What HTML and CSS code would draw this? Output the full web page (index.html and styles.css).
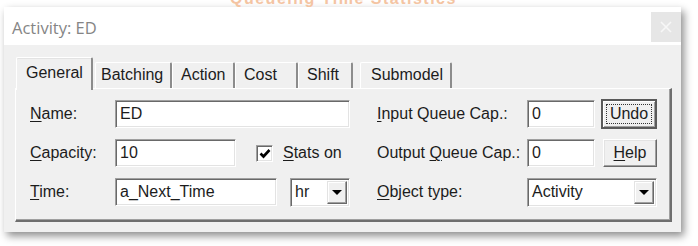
FILE: index.html
```html
<!DOCTYPE html>
<html lang="en">
<head>
  <meta charset="UTF-8">
  <title>Activity: ED</title>
  <link rel="stylesheet" href="styles.css">
</head>
<body>
  <div class="backdrop"><span>Queueing Time Statistics</span></div>

  <div class="window">
    <div class="titlebar">
      <span class="title">Activity: ED</span>
      <div class="close-btn">
        <svg width="12" height="12" viewBox="0 0 12 12"><path d="M1 1L11 11M11 1L1 11" stroke="#f7f7f7" stroke-width="1.6"/></svg>
      </div>
    </div>

    <div class="dialog-body">
      <div class="tabs">
        <div class="tab tab-active">General</div>
        <div class="tab tab-batching">Batching</div>
        <div class="tab tab-action">Action</div>
        <div class="tab tab-cost">Cost</div>
        <div class="tab tab-shift">Shift</div>
        <div class="tab tab-submodel">Submodel</div>
      </div>

      <div class="panel">
        <!-- left column -->
        <div class="group group-left">
          <label class="label"><u>N</u>ame:</label>
          <div class="row">
            <div class="field field-name">ED</div>
          </div>

          <label class="label"><u>C</u>apacity:</label>
          <div class="row">
            <div class="field field-capacity">10</div>
            <div class="checkbox">
              <svg width="12" height="11" viewBox="0 0 12 11"><path d="M1.5 5.5L4.5 8.5L10.5 2" stroke="#000" stroke-width="2.6" fill="none"/></svg>
            </div>
            <span class="check-label"><u>S</u>tats on</span>
          </div>

          <label class="label"><u>T</u>ime:</label>
          <div class="row">
            <div class="field field-time">a_Next_Time</div>
            <div class="combo combo-unit">
              <span class="combo-text">hr</span>
              <span class="combo-arrow"></span>
            </div>
          </div>
        </div>

        <!-- right column -->
        <div class="group group-right">
          <label class="label"><u>I</u>nput Queue Cap.:</label>
          <div class="field field-cap">0</div>
          <div class="btn btn-default"><span class="focus">Undo</span></div>

          <label class="label">Output <u>Q</u>ueue Cap.:</label>
          <div class="field field-cap">0</div>
          <div class="btn btn-help"><u>H</u>elp</div>

          <label class="label"><u>O</u>bject type:</label>
          <div class="combo combo-type">
            <span class="combo-text">Activity</span>
            <span class="combo-arrow"></span>
          </div>
        </div>
      </div>
    </div>
  </div>
</body>
</html>
```

FILE: styles.css
```css
body {
  margin: 0;
  min-height: 246px;
  background: #fff;
  font-family: "Liberation Sans", Arial, sans-serif;
  font-size: 16px;
  color: #1c1c1c;
}

.backdrop {
  height: 7px;
  overflow: hidden;
  padding-left: 230px;
}

.backdrop span {
  display: block;
  margin-top: -9px;
  font-size: 16px;
  line-height: 16px;
  letter-spacing: 1.5px;
  color: #f4c4a2;
  font-weight: bold;
}

.window {
  margin-left: 4px;
  width: 677px;
  height: 225px;
  background: #f0f0f0;
  box-shadow: 3px 4px 8px rgba(0, 0, 0, 0.45);
  display: flex;
  flex-direction: column;
}

.titlebar {
  height: 38px;
  background: #fff;
  display: flex;
  align-items: flex-start;
  justify-content: space-between;
}

.title {
  font-family: "Open Sans", "Noto Sans", sans-serif;
  font-size: 16.5px;
  color: #858585;
  margin: 9px 0 0 8px;
}

.close-btn {
  width: 30px;
  height: 30px;
  margin-top: 5px;
  background: #e6e6e6;
  display: flex;
  align-items: center;
  justify-content: center;
}

.dialog-body {
  padding: 12px 9px 10px 11px;
}

/* tabs */
.tabs {
  display: flex;
  height: 31px;
  position: relative;
  z-index: 1;
  padding-left: 1px;
}

.tab {
  box-sizing: border-box;
  height: 26px;
  margin-top: 5px;
  padding-left: 8px;
  line-height: 24px;
  border-top: 1px solid #fff;
  border-left: 1px solid #fff;
  border-right: 2px solid #8c8c8c;
  border-top-left-radius: 2px;
  border-top-right-radius: 2px;
  background: #f0f0f0;
  white-space: nowrap;
}

.tab-active {
  width: 77px;
  height: 33px;
  margin-top: 0;
  margin-right: 2px;
  padding-left: 9px;
  line-height: 30px;
  box-shadow: inset 0 1px 0 #e3e3e3;
}

.tab-batching { width: 77px; padding-left: 5px; }
.tab-action { width: 63px; padding-left: 8px; }
.tab-cost { width: 63px; }
.tab-shift { width: 55px; margin-right: 7px; }
.tab-submodel { width: 92px; padding-left: 10px; }

.panel {
  box-sizing: border-box;
  width: 657px;
  height: 134px;
  border-top: 1px solid #fff;
  border-left: 1px solid #fff;
  border-right: 2px solid #6e6e6e;
  border-bottom: 2px solid #6e6e6e;
  box-shadow: inset -1px -1px 0 #a0a0a0;
  padding: 11px 0 0 14px;
  display: flex;
  gap: 27px;
}

.group {
  display: grid;
  grid-auto-rows: 28px;
  row-gap: 11px;
  align-items: center;
}

.group-left {
  width: 320px;
  grid-template-columns: 85px auto;
}

.group-right {
  grid-template-columns: 150px 68px auto;
}

.row {
  display: flex;
  align-items: center;
  height: 28px;
}

u {
  text-decoration-thickness: 1px;
  text-underline-offset: 2px;
}

/* sunken fields */
.field,
.combo,
.checkbox {
  box-sizing: border-box;
  background: #fff;
  border: 1px solid;
  border-color: #a0a0a0 #fff #fff #a0a0a0;
  box-shadow: inset 1px 1px 0 #696969, inset -1px -1px 0 #e3e3e3;
}

.field {
  height: 28px;
  line-height: 26px;
  padding-left: 4px;
  white-space: nowrap;
}

.field-name { width: 235px; }
.field-capacity { width: 121px; }
.field-time { width: 162px; }
.field-cap { width: 68px; }

.checkbox {
  width: 17px;
  height: 17px;
  margin-left: 20px;
  display: flex;
  align-items: center;
  justify-content: center;
}

.check-label {
  margin-left: 10px;
}

.combo {
  height: 29px;
  display: flex;
  align-items: center;
  justify-content: space-between;
  padding: 2px;
}

.combo-unit {
  width: 60px;
  margin-left: 13px;
}

.combo-type {
  grid-column: 2 / 4;
  width: 130px;
}

.combo-text {
  padding-left: 2px;
}

.combo-arrow {
  box-sizing: border-box;
  width: 20px;
  height: 23px;
  background: #f0f0f0;
  border: 1px solid;
  border-color: #e3e3e3 #696969 #696969 #e3e3e3;
  box-shadow: inset -1px -1px 0 #a0a0a0, inset 1px 1px 0 #fff;
  display: flex;
  align-items: center;
  justify-content: center;
}

.combo-arrow::after {
  content: "";
  border-left: 5px solid transparent;
  border-right: 5px solid transparent;
  border-top: 5px solid #000;
}

/* buttons */
.btn {
  box-sizing: border-box;
  height: 28px;
  margin-left: 8px;
  width: 54px;
  background: #f0f0f0;
  border: 1px solid;
  border-color: #fff #696969 #696969 #fff;
  box-shadow: inset -1px -1px 0 #a0a0a0, inset 1px 1px 0 #e3e3e3;
  display: flex;
  align-items: center;
  justify-content: center;
}

.btn-default {
  width: 56px;
  height: 30px;
  margin-left: 6px;
  border: 2px solid #5a5a5a;
  box-shadow: inset 1px 1px 0 #fff, inset -1px -1px 0 #a0a0a0;
  padding: 3px;
}

.focus {
  box-sizing: border-box;
  width: 100%;
  height: 100%;
  border: 1px dotted #333;
  display: flex;
  align-items: center;
  justify-content: center;
}
```
